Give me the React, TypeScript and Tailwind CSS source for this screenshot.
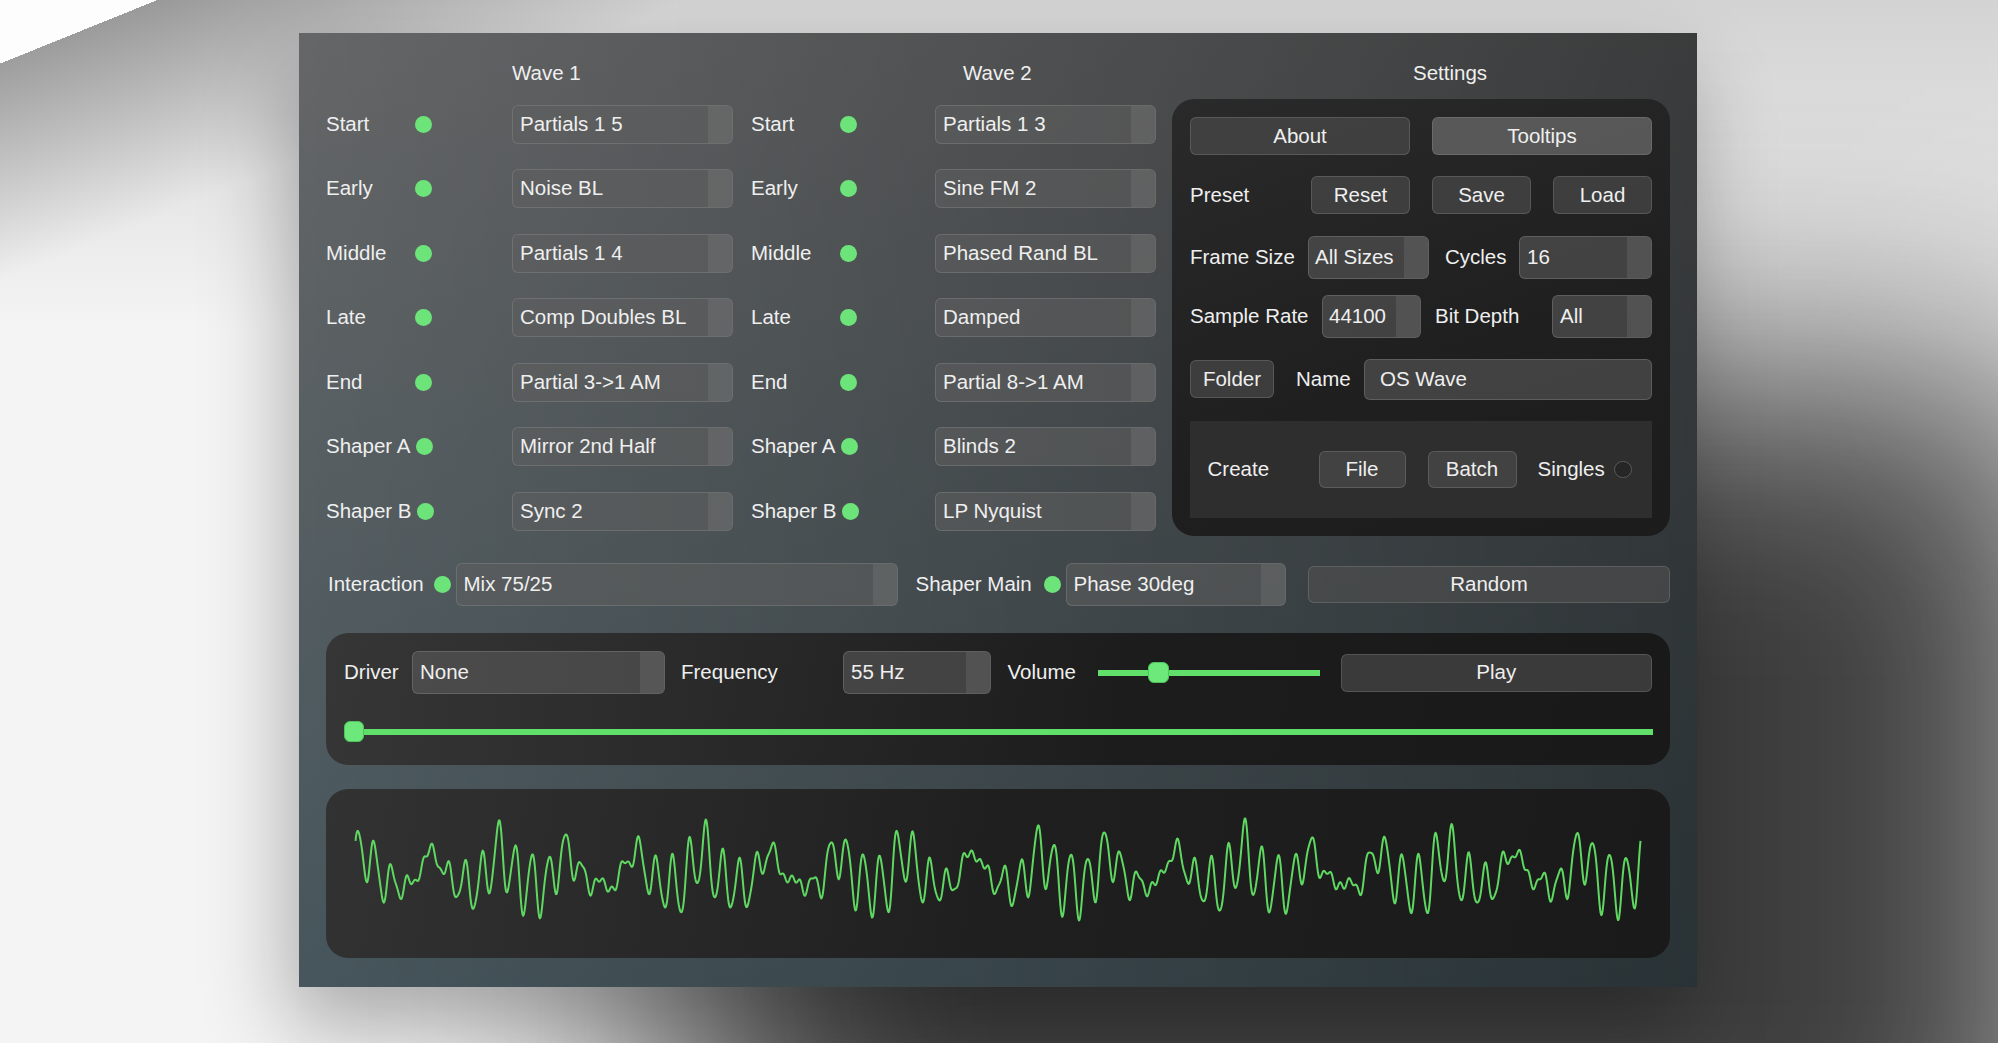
import React from "react";

const FONT = "font-['Liberation_Sans',Arial,sans-serif]";

function Dot() {
  return <div className="h-[17px] w-[17px] shrink-0 rounded-full bg-[#6de47a]" />;
}

function Combo({ text, cls, handle = true, pad = "pl-[7px]" }: { text: string; cls: string; handle?: boolean; pad?: string }) {
  return (
    <div
      className={`flex shrink-0 overflow-hidden rounded-[6px] border border-[rgba(150,150,150,0.35)] bg-[rgba(95,95,95,0.55)] ${cls}`}
    >
      <div className={`flex flex-1 items-center whitespace-nowrap ${pad}`}>{text}</div>
      {handle && <div className="w-[24px] bg-[rgba(140,140,140,0.22)]" />}
    </div>
  );
}

function Btn({ text, cls, light = false }: { text: string; cls: string; light?: boolean }) {
  return (
    <div
      className={`flex shrink-0 items-center justify-center rounded-[6px] border border-[rgba(150,150,150,0.3)] ${
        light ? "bg-[rgba(110,110,110,0.7)]" : "bg-[rgba(80,80,80,0.6)]"
      } ${cls}`}
    >
      {text}
    </div>
  );
}

const wave1: [string, string][] = [
  ["Start", "Partials 1 5"],
  ["Early", "Noise BL"],
  ["Middle", "Partials 1 4"],
  ["Late", "Comp Doubles BL"],
  ["End", "Partial 3->1 AM"],
  ["Shaper A", "Mirror 2nd Half"],
  ["Shaper B", "Sync 2"],
];
const wave2: [string, string][] = [
  ["Start", "Partials 1 3"],
  ["Early", "Sine FM 2"],
  ["Middle", "Phased Rand BL"],
  ["Late", "Damped"],
  ["End", "Partial 8->1 AM"],
  ["Shaper A", "Blinds 2"],
  ["Shaper B", "LP Nyquist"],
];

function WaveColumn({ title, rows, cls, titleCls }: { title: string; rows: [string, string][]; cls: string; titleCls: string }) {
  return (
    <div className={`flex shrink-0 flex-col ${cls}`}>
      <div className="flex h-[37px] items-center">
        <span className={titleCls}>{title}</span>
      </div>
      {rows.map(([label, value]) => (
        <div key={label} className="flex h-[64.5px] items-center">
          <span className="min-w-[83px] whitespace-nowrap">{label}</span>
          <div className="ml-[6px]">
            <Dot />
          </div>
          <div className="ml-auto">
            <Combo text={value} cls="h-[39px] w-[221px]" />
          </div>
        </div>
      ))}
    </div>
  );
}

function wavePoints(): string {
  const N = 2000;
  const W = 1285;
  const A = 55;
  const C = 84.5;
  const vals: number[] = [];
  let max = 0;
  for (let i = 0; i <= N; i++) {
    const t = i / N;
    const v =
      0.55 * Math.sin(2 * Math.PI * 74 * t + 0.3) +
      0.45 * Math.sin(2 * Math.PI * 81 * t + 1.1) +
      0.5 * Math.sin(2 * Math.PI * 19 * t + 0.7) +
      0.18 * Math.sin(2 * Math.PI * 38 * t + 0.2) +
      0.12 * Math.sin(2 * Math.PI * 150 * t + 2.0);
    vals.push(v);
    max = Math.max(max, Math.abs(v));
  }
  return vals
    .map((v, i) => `${(29 + (i / N) * W).toFixed(2)},${(C - (v / max) * A).toFixed(2)}`)
    .join(" ");
}

export default function App() {
  const pts = wavePoints();
  return (
    <div
      className={`h-[1043px] w-[1998px] overflow-hidden pl-[299px] pt-[33px] text-[20.5px] text-[#efefef] ${FONT} bg-[linear-gradient(158deg,#fdfdfd_59px,transparent_59px),linear-gradient(158deg,rgba(0,0,0,0.28)_59px,rgba(0,0,0,0)_260px),linear-gradient(to_bottom,#d4d4d4,#f4f4f4_330px)]`}
    >
      <div className="flex h-[954px] w-[1398px] flex-col bg-[linear-gradient(to_right,rgba(0,0,0,0)_0%,rgba(0,0,0,0.42)_100%),linear-gradient(to_bottom,#656667,#46565c)] px-[27px] pt-[22px] shadow-[-10px_40px_80px_rgba(0,0,0,0.3),380px_330px_400px_0px_rgba(0,0,0,0.75)]">
        {/* top area */}
        <div className="flex h-[488.5px]">
          <WaveColumn title="Wave 1" rows={wave1} cls="w-[407px]" titleCls="ml-[186px]" />
          <WaveColumn title="Wave 2" rows={wave2} cls="ml-[18px] w-[405px]" titleCls="ml-[212px]" />
          <div className="ml-[16px] flex w-[498px] shrink-0 flex-col">
            <div className="flex h-[37px] items-center">
              <span className="ml-[241px]">Settings</span>
            </div>
            <div className="mt-[7px] flex h-[437px] flex-col rounded-[22px] bg-[linear-gradient(160deg,#2a2a2a,#1f1f1f_60%,#1c1c1c)] px-[18px] pt-[18px]">
              <div className="flex h-[38px]">
                <Btn text="About" cls="w-[220px]" />
                <Btn text="Tooltips" cls="ml-[22px] w-[220px]" light />
              </div>
              <div className="mt-[21px] flex h-[38px] items-center">
                <span className="w-[121px]">Preset</span>
                <Btn text="Reset" cls="h-[38px] w-[99px]" />
                <Btn text="Save" cls="ml-[22px] h-[38px] w-[99px]" />
                <Btn text="Load" cls="ml-[22px] h-[38px] w-[99px]" />
              </div>
              <div className="mt-[21.5px] flex h-[43.5px] items-center">
                <span className="w-[118px] whitespace-nowrap">Frame Size</span>
                <Combo text="All Sizes" cls="h-[43.5px] w-[121px]" pad="pl-[6px]" />
                <span className="w-[90px] pl-[16px]">Cycles</span>
                <Combo text="16" cls="h-[43.5px] w-[133px]" />
              </div>
              <div className="mt-[15.5px] flex h-[43.5px] items-center">
                <span className="w-[132px] whitespace-nowrap">Sample Rate</span>
                <Combo text="44100" cls="h-[43.5px] w-[99px]" pad="pl-[6px]" />
                <span className="w-[131px] whitespace-nowrap pl-[14px]">Bit Depth</span>
                <Combo text="All" cls="h-[43.5px] w-[100px]" />
              </div>
              <div className="mt-[20.5px] flex h-[41.5px] items-center">
                <Btn text="Folder" cls="h-[38px] w-[84px]" />
                <span className="w-[90px] pl-[22px]">Name</span>
                <Combo text="OS Wave" cls="h-[41.5px] w-[288px]" handle={false} pad="pl-[15px]" />
              </div>
              <div className="mt-[20.5px] flex h-[97.5px] items-center bg-[#2e2e2e] pl-[17.5px]">
                <span className="w-[111px]">Create</span>
                <Btn text="File" cls="h-[37px] w-[87px]" />
                <Btn text="Batch" cls="ml-[22px] h-[37px] w-[89px]" />
                <span className="pl-[21px]">Singles</span>
                <div className="ml-[9px] h-[17px] w-[18px] rounded-full border-[1.5px] border-[#5a5a5a] bg-[#262626]" />
              </div>
            </div>
          </div>
        </div>

        {/* interaction row */}
        <div className="mt-[19px] flex h-[43px] items-center">
          <span className="w-[107.5px] whitespace-nowrap pl-[2px]">Interaction</span>
          <Dot />
          <Combo text="Mix 75/25" cls="ml-[5px] h-[43px] w-[442px]" />
          <span className="w-[146px] whitespace-nowrap pl-[18px]">Shaper Main</span>
          <Dot />
          <Combo text="Phase 30deg" cls="ml-[5px] h-[43px] w-[220.5px]" />
          <Btn text="Random" cls="ml-[22px] h-[37px] w-[362px]" />
        </div>

        {/* player */}
        <div className="mt-[27px] flex h-[132px] flex-col rounded-[22px] bg-[linear-gradient(100deg,#363636,#1c1c1c_60%,#191919)] pl-[18px] pr-[17px] pt-[18px]">
          <div className="flex h-[44px] items-center">
            <span className="w-[68px]">Driver</span>
            <Combo text="None" cls="h-[43.5px] w-[253px]" />
            <span className="w-[178px] pl-[16px]">Frequency</span>
            <Combo text="55 Hz" cls="h-[43.5px] w-[148px]" />
            <span className="w-[107px] pl-[16.5px]">Volume</span>
            <div className="relative flex h-[21px] w-[221.5px] items-center">
              <div className="h-[6px] w-full bg-[#60df6b]" />
              <div className="absolute left-[50px] top-0 h-[21px] w-[21px] rounded-[6px] border border-[#4fc35b] bg-[#6ce97a]" />
            </div>
            <Btn text="Play" cls="ml-[21.5px] h-[38px] w-[310.5px]" />
          </div>
          <div className="mt-[26.5px] flex h-[21px] items-center">
            <div className="h-[21px] w-[20px] shrink-0 rounded-[6px] border border-[#4fc35b] bg-[#6ce97a]" />
            <div className="h-[6px] flex-1 bg-[#60df6b]" />
          </div>
        </div>

        {/* waveform */}
        <div className="mt-[24.5px] h-[169px] rounded-[22px] bg-[linear-gradient(100deg,#323232,#1f1f1f_50%,#1a1a1a)]">
          <svg viewBox="0 0 1343 169" className="h-full w-full">
            <polyline points={pts} fill="none" stroke="#5fd862" strokeWidth="2" strokeLinejoin="round" />
          </svg>
        </div>
      </div>
    </div>
  );
}
